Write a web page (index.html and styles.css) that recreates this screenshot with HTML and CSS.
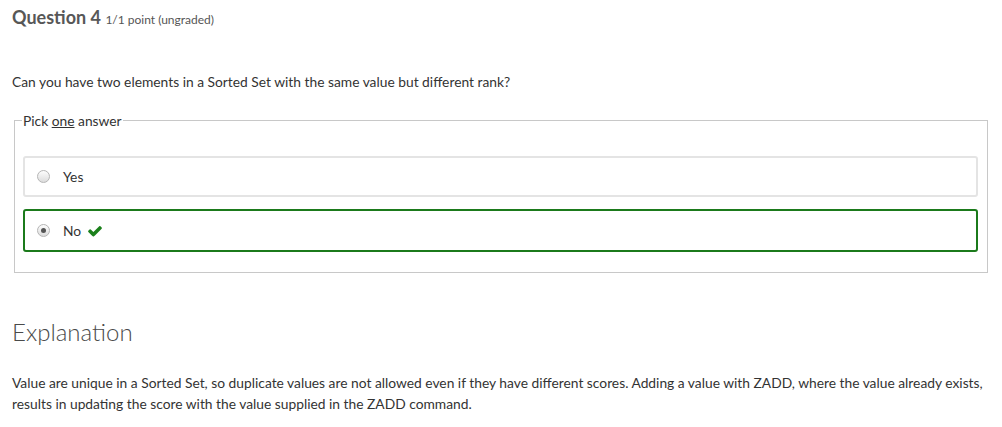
FILE: index.html
```html
<!DOCTYPE html>
<html>
<head>
<meta charset="utf-8">
<link rel="stylesheet" href="styles.css">
</head>
<body>
<div class="problem">
  <h3 class="title">Question 4 <span class="points">1/1 point (ungraded)</span></h3>
  <p class="prompt">Can you have two elements in a Sorted Set with the same value but different rank?</p>
  <fieldset class="choices">
    <legend class="legend">Pick <u>one</u> answer</legend>
    <label class="choice">
      <input type="radio" name="q4" class="radio">
      <span class="label-text">Yes</span>
    </label>
    <label class="choice correct">
      <input type="radio" name="q4" class="radio" checked>
      <span class="label-text">No</span>
      <svg class="check" viewBox="0 0 1792 1792" width="16" height="16"><path fill="#1b801b" d="M1671 566q0 40-28 68l-724 724-136 136q-28 28-68 28t-68-28l-136-136-362-362q-28-28-28-68t28-68l136-136q28-28 68-28t68 28l294 295 656-657q28-28 68-28t68 28l136 136q28 28 28 68z"/></svg>
    </label>
  </fieldset>
  <h2 class="explain-title">Explanation</h2>
  <p class="explain">Value are unique in a Sorted Set, so duplicate values are not allowed even if they have different scores. Adding a value with ZADD, where the value already exists, results in updating the score with the value supplied in the ZADD command.</p>
</div>
</body>
</html>
```
FILE: styles.css
```css
html, body {
  margin: 0;
  padding: 0;
  background: #fff;
}
body {
  font-family: Lato, "Open Sans", sans-serif;
  color: #333;
}
.problem {
  padding: 5px 12px 0 12px;
  width: 980px;
}
.title {
  margin: 0;
  font-size: 18px;
  line-height: 24px;
  font-weight: 700;
  color: #575757;
}
.points {
  font-size: 12px;
  font-weight: 400;
  color: #555;
}
.prompt {
  margin: 40px 0 0 0;
  font-size: 13.8px;
  line-height: 20px;
  color: #333;
}
.choices {
  margin: 20px 0 0 2px;
  padding: 27px 9px 20px 8px;
  border: 1px solid #c8c8c8;
  width: 955px;
  display: flex;
  flex-direction: column;
  gap: 12px;
}
.legend {
  font-size: 13.8px;
  color: #333;
  padding: 0 1px;
  margin-left: -1px;
}
.choice {
  display: flex;
  align-items: center;
  height: 37px;
  border: 2px solid #e4e4e4;
  border-radius: 3px;
  padding-left: 12px;
  font-size: 13.8px;
  color: #333;
}
.choice.correct {
  height: 39px;
  border-color: #1b7a1b;
}
.radio {
  appearance: none;
  -webkit-appearance: none;
  margin: 0 13px 0 0;
  width: 13px;
  height: 13px;
  border-radius: 50%;
  border: 1px solid #b5b5b5;
  background: linear-gradient(#fdfdfd, #dcdcdc);
  position: relative;
}
.radio:checked::after {
  content: "";
  position: absolute;
  left: 3px;
  top: 3px;
  width: 5px;
  height: 5px;
  border-radius: 50%;
  background: #555;
}
.check {
  margin-left: 6px;
}
.explain-title {
  margin: 44px 0 0 0;
  font-size: 24px;
  line-height: 30px;
  font-weight: 300;
  color: #4a4a4a;
}
.explain {
  margin: 25px 0 0 0;
  font-size: 13.8px;
  line-height: 21px;
  color: #333;
}
```
